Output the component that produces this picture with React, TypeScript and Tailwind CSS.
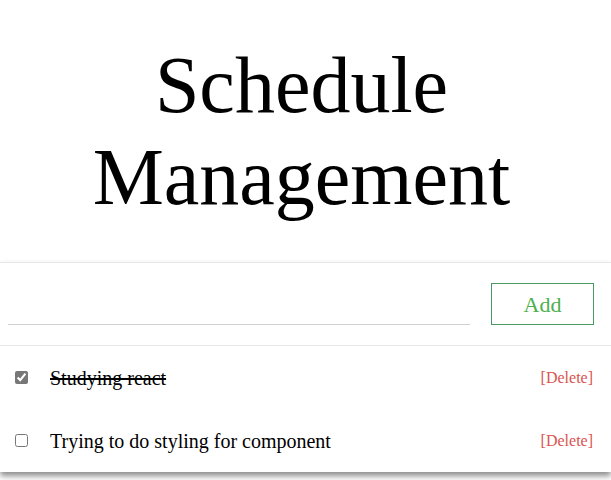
import React, { useState } from 'react';

interface Todo {
  id: number;
  text: string;
  done: boolean;
}

const serif = "font-['Liberation_Serif','Times_New_Roman',serif]";

export default function App() {
  const [todos, setTodos] = useState<Todo[]>([
    { id: 1, text: 'Studying react', done: true },
    { id: 2, text: 'Trying to do styling for component', done: false },
  ]);
  const [input, setInput] = useState('');

  const toggle = (id: number) =>
    setTodos(todos.map(t => (t.id === id ? { ...t, done: !t.done } : t)));

  const remove = (id: number) => setTodos(todos.filter(t => t.id !== id));

  const add = () => {
    if (!input.trim()) return;
    setTodos([...todos, { id: Date.now(), text: input, done: false }]);
    setInput('');
  };

  return (
    <div className={`min-h-screen bg-white text-black ${serif}`}>
      {/* Title */}
      <h1 className="pt-[39px] pb-[39px] pr-[8px] text-center text-[80px] font-normal leading-[92px]">
        Schedule
        <br />
        Management
      </h1>

      {/* Card */}
      <div className="border-t border-[#e8e8e8] bg-white shadow-[0_4px_6px_rgba(0,0,0,0.45)]">
        {/* Form */}
        <div className="flex items-end gap-[21px] pt-[20px] pb-[20px] pl-[8px] pr-[17px] border-b border-[#e8e8e8]">
          <input
            value={input}
            onChange={e => setInput(e.target.value)}
            className={`flex-1 h-[30px] border-b border-[#d0d0d0] bg-transparent text-[20px] outline-none ${serif}`}
          />
          <button
            onClick={add}
            className={`w-[103px] h-[42px] border border-[#4a9a66] text-[22px] text-[#4caf50] ${serif}`}
          >
            Add
          </button>
        </div>

        {/* List */}
        <div>
          {todos.map(todo => (
            <div key={todo.id} className="flex items-center h-[63px] pl-[15px] pr-[18px]">
              <input
                type="checkbox"
                checked={todo.done}
                onChange={() => toggle(todo.id)}
                className="w-[13px] h-[13px] m-0 accent-[#777]"
              />
              <span className={`ml-[22px] flex-1 text-[20px] ${todo.done ? 'line-through' : ''}`}>
                {todo.text}
              </span>
              <button onClick={() => remove(todo.id)} className={`text-[16px] text-[#d9534f] ${serif}`}>
                [Delete]
              </button>
            </div>
          ))}
        </div>
      </div>
    </div>
  );
}
